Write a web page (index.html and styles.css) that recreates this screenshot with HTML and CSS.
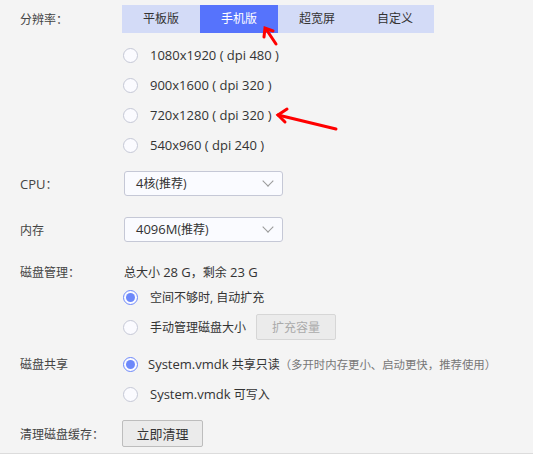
FILE: index.html
```html
<!DOCTYPE html>
<html>
<head>
    <link rel="stylesheet" href="styles.css">
</head>
<body>
    <div class="page">
        <div class="row tabs-row">
            <div class="label">分辨率：</div>
            <div class="tabs">
                <div class="tab">平板版</div>
                <div class="tab active">手机版</div>
                <div class="tab">超宽屏</div>
                <div class="tab">自定义</div>
            </div>
        </div>

        <div class="options res-list">
            <div class="radio-item en"><span class="radio"></span>1080x1920 ( dpi 480 )</div>
            <div class="radio-item en"><span class="radio"></span>900x1600 ( dpi 320 )</div>
            <div class="radio-item en"><span class="radio"></span>720x1280 ( dpi 320 )</div>
            <div class="radio-item en"><span class="radio"></span>540x960 ( dpi 240 )</div>
        </div>

        <div class="row cpu-row">
            <div class="label"><span class="en">CPU</span>：</div>
            <div class="select"><span class="en">4</span>核(推荐)<span class="caret"></span></div>
        </div>

        <div class="row mem-row">
            <div class="label">内存</div>
            <div class="select"><span class="en">4096M</span>(推荐)<span class="caret"></span></div>
        </div>

        <div class="row disk-row">
            <div class="label">磁盘管理：</div>
            <div class="disk-info">总大小 <span class="en">28 G</span>，剩余 <span class="en">23 G</span></div>
        </div>
        <div class="options">
            <div class="radio-item"><span class="radio checked"></span>空间不够时, 自动扩充</div>
            <div class="radio-item"><span class="radio"></span>手动管理磁盘大小<button class="btn disabled">扩充容量</button></div>
        </div>

        <div class="row share-row">
            <div class="label">磁盘共享</div>
            <div class="radio-item"><span class="radio checked"></span><span class="en">System.vmdk</span>&nbsp;共享只读<span class="hint">（多开时内存更小、启动更快，推荐使用）</span></div>
        </div>
        <div class="options">
            <div class="radio-item"><span class="radio"></span><span class="en">System.vmdk</span>&nbsp;可写入</div>
        </div>

        <div class="row clean-row">
            <div class="label">清理磁盘缓存：</div>
            <button class="btn clean">立即清理</button>
        </div>
    </div>

    <svg class="marks" width="533" height="459" viewBox="0 0 533 459">
        <g stroke="#ff0000" stroke-width="3" stroke-linecap="round" fill="none">
            <line x1="266" y1="29" x2="276" y2="44"/>
            <polyline points="264,37 265,28 273,31"/>
            <line x1="278" y1="115" x2="336" y2="129"/>
            <polyline points="287,109 278,115 285,122"/>
        </g>
    </svg>
</body>
</html>
```

FILE: styles.css
```css
body {
    margin: 0;
    background-color: #ffffff;
    font-family: "Open Sans", "Noto Sans CJK SC", sans-serif;
    font-size: 12px;
    color: #333;
}
.en {
    font-size: 13px;
}
.page {
    background-color: #f4f4f4;
    height: 448px;
    padding: 5px 0 0 20px;
    border-bottom: 1px solid #dcdcdc;
}
.row {
    display: flex;
    align-items: center;
}
.label {
    width: 102px;
    flex-shrink: 0;
    color: #444;
}
.tabs-row {
    height: 28px;
}
.tabs {
    display: flex;
    background-color: #d3dbf7;
}
.tab {
    width: 78px;
    height: 28px;
    line-height: 28px;
    text-align: center;
    color: #333;
}
.tab.active {
    background-color: #5673fc;
    color: #fff;
}
.options {
    padding-left: 103px;
}
.res-list {
    margin-top: 7px;
}
.radio-item {
    display: flex;
    align-items: center;
    height: 30px;
    color: #333;
}
.radio {
    width: 13px;
    height: 13px;
    border: 1px solid #c5c8d6;
    border-radius: 50%;
    background-color: #fbfbff;
    margin-right: 12px;
    flex-shrink: 0;
    position: relative;
}
.radio.checked {
    border-color: #6d88fa;
}
.radio.checked::after {
    content: "";
    position: absolute;
    left: 2px;
    top: 2px;
    width: 9px;
    height: 9px;
    border-radius: 50%;
    background-color: #6d88fa;
}
.cpu-row {
    margin-top: 11px;
}
.mem-row {
    margin-top: 21px;
}
.select {
    width: 146px;
    height: 23px;
    margin-left: 2px;
    padding-left: 11px;
    line-height: 23px;
    border: 1px solid #c5c8d6;
    border-radius: 3px;
    background-color: #fafbff;
    color: #333;
    position: relative;
}
.caret {
    position: absolute;
    right: 10px;
    top: 5px;
    width: 7px;
    height: 7px;
    border-right: 1px solid #999;
    border-bottom: 1px solid #999;
    transform: rotate(45deg);
}
.disk-row {
    margin-top: 20px;
    height: 20px;
}
.disk-info {
    margin-left: 2px;
}
.btn {
    font-family: inherit;
    font-size: 12px;
    background-color: #ebebeb;
    border: 1px solid #bdbdbd;
    border-radius: 2px;
    color: #333;
    padding: 0;
}
.btn.disabled {
    width: 80px;
    height: 26px;
    margin-left: 10px;
    color: #aaa;
    border-color: #d6d6d6;
}
.share-row {
    margin-top: 7px;
}
.share-row .radio-item {
    margin-left: 1px;
}
.share-row .radio {
    margin-right: 10px;
}
.hint {
    color: #777;
    font-size: 11.4px;
}
.clean-row {
    margin-top: 11px;
}
.btn.clean {
    width: 81px;
    height: 27px;
    font-size: 13px;
}
.marks {
    position: absolute;
    left: 0;
    top: 0;
    pointer-events: none;
}
```
